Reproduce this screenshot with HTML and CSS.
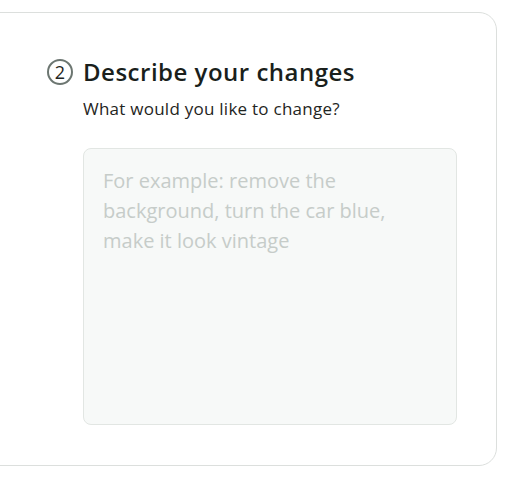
FILE: index.html
```html
<!DOCTYPE html>
<html lang="en">
<head>
<meta charset="utf-8">
<title>Describe your changes</title>
<link rel="stylesheet" href="styles.css">
</head>
<body>
<div class="page">
  <section class="card">
    <div class="step">
      <span class="step-num">2</span>
      <h2 class="step-title">Describe your changes</h2>
      <div class="step-body">
        <label class="step-label" for="changes">What would you like to change?</label>
        <textarea id="changes" class="changes-input" placeholder="For example: remove the background, turn the car blue, make it look vintage"></textarea>
      </div>
    </div>
  </section>
</div>
</body>
</html>
```
FILE: styles.css
```css
* { box-sizing: border-box; }
html, body { margin: 0; padding: 0; background: #ffffff; }
body {
  font-family: "Open Sans", "Noto Sans", sans-serif;
  color: #1b211e;
  overflow: hidden;
}
.page {
  padding: 12px 20px 0 0;
}
.card {
  margin-left: -33px;
  border: 1px solid #dcdfdd;
  border-radius: 18px;
  padding: 43px 39px 40px 79px;
  background: #ffffff;
}
.step {
  display: grid;
  grid-template-columns: 26px 1fr;
  column-gap: 10px;
  align-items: center;
}
.step-num {
  width: 26px;
  height: 26px;
  border: 2px solid #6c7671;
  border-radius: 50%;
  display: flex;
  align-items: center;
  justify-content: center;
  font-size: 18px;
  line-height: 1;
  font-weight: 400;
  color: #1f2522;
}
.step-title {
  margin: 0;
  font-size: 24px;
  line-height: 32px;
  font-weight: 600;
  letter-spacing: 0.5px;
  color: #1a1f1c;
}
.step-body {
  grid-column: 2;
  display: flex;
  flex-direction: column;
}
.step-label {
  margin-top: 9px;
  font-size: 17px;
  line-height: 24px;
  letter-spacing: 0.25px;
  color: #1f2522;
}
.changes-input {
  margin-top: 27px;
  width: 374px;
  height: 277px;
  resize: none;
  border: 1px solid #e2e6e3;
  border-radius: 8px;
  background: #f7f9f8;
  padding: 17px 19px;
  font-family: "Open Sans", "Noto Sans", sans-serif;
  font-size: 20px;
  line-height: 30px;
  color: #1f2522;
  outline: none;
}
.changes-input::placeholder {
  color: #c6ccc9;
  opacity: 1;
}
```
